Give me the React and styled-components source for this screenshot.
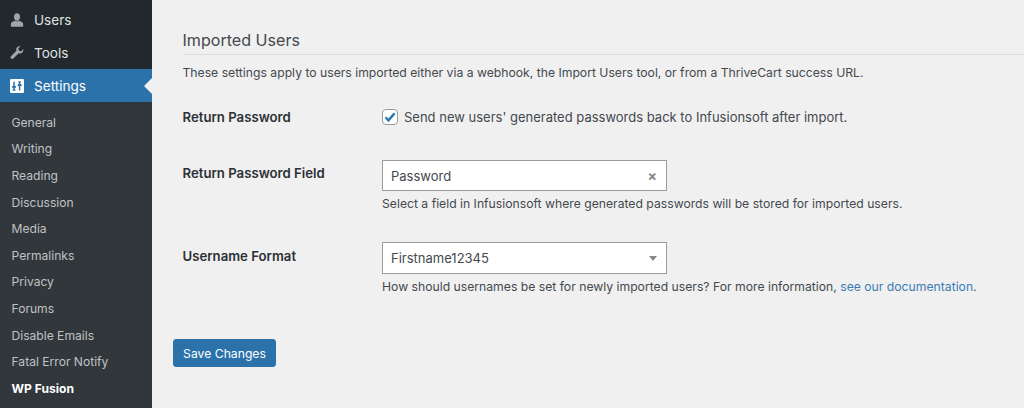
import React from "react";
import styled, { createGlobalStyle } from "styled-components";

const GlobalStyle = createGlobalStyle`
  html, body {
    margin: 0;
    padding: 0;
    background: #f0f0f0;
    overflow: hidden;
  }
  body {
    font-family: Inter, "Liberation Sans", sans-serif;
  }
`;

const subItems = [
  "General",
  "Writing",
  "Reading",
  "Discussion",
  "Media",
  "Permalinks",
  "Privacy",
  "Forums",
  "Disable Emails",
  "Fatal Error Notify",
];

const UserIcon = () => (
  <svg width="16" height="16" viewBox="0 0 16 16" fill="currentColor">
    <ellipse cx="8" cy="4.6" rx="3.4" ry="4.2" />
    <path d="M1 15.8v-3.2c0-1.7 1.6-2.6 3.4-3.2L6 8.9c1.2.8 2.8.8 4 0l1.6.5c1.8.6 3.4 1.5 3.4 3.2v3.2z" />
  </svg>
);

const WrenchIcon = () => (
  <svg width="17" height="17" viewBox="0 0 17 17" fill="currentColor">
    <path d="M16.2 4.4c.3 1.6-.2 3.1-1.3 4.1-1.2 1.1-2.9 1.4-4.3.8L4 15.9c-.8.8-2 .8-2.8 0s-.8-2 0-2.8l6.6-6.6c-.6-1.5-.3-3.2.9-4.3C9.8 1.1 11.3.6 12.8.9L10.2 3.5l.6 2.9 2.9.6z" />
  </svg>
);

const SettingsIcon = () => (
  <svg width="16" height="16" viewBox="0 0 16 16">
    <rect width="16" height="16" rx="1.5" fill="#fff" />
    <path d="M4.6 3v7M2.6 8.2l2 2.4 2-2.4M11 13V6M9 7.8l2-2.4 2 2.4M3 12.5h3.2M9.6 3.5h2.8" fill="none" stroke="#2b72ab" strokeWidth="1.7" />
  </svg>
);

const Page = styled.div`
  display: flex;
  width: 1024px;
  height: 408px;
  overflow: hidden;
  color: #44494e;
`;

const Sidebar = styled.nav`
  flex: 0 0 152px;
  display: flex;
  flex-direction: column;
  padding-top: 3px;
  background: #23282d;
`;

const MenuItem = styled.div`
  position: relative;
  display: flex;
  align-items: center;
  gap: 10px;
  height: 33px;
  padding-left: 10px;
  font-size: 13.6px;
  color: ${(p) => (p.$active ? "#fff" : "#dfe1e3")};
  background: ${(p) => (p.$active ? "#2b72ab" : "transparent")};
`;

const MenuIcon = styled.span`
  display: flex;
  justify-content: center;
  width: 14px;
  color: ${(p) => (p.$active ? "#fff" : "#a0a5aa")};
`;

const Notch = styled.span`
  position: absolute;
  right: 0;
  top: 9px;
  border: 8px solid transparent;
  border-left-width: 0;
  border-right-color: #f0f0f0;
`;

const SubMenu = styled.div`
  flex: 1;
  display: flex;
  flex-direction: column;
  padding-top: 7px;
  background: #32373c;
`;

const SubItem = styled.div`
  display: flex;
  align-items: center;
  height: 26.6px;
  padding-left: 11.5px;
  font-size: 12.1px;
  font-weight: ${(p) => (p.$active ? 700 : 400)};
  color: ${(p) => (p.$active ? "#fff" : "#bfc2c4")};
`;

const Content = styled.main`
  flex: 1;
  min-width: 0;
  padding: 30px 0 0 21px;
`;

const Title = styled.h2`
  margin: 0 0 0 9.5px;
  padding-bottom: 3px;
  height: 21px;
  font-size: 16.1px;
  font-weight: 400;
  line-height: 21px;
  color: #44494e;
  border-bottom: 1px solid #dcdcde;
`;

const Intro = styled.p`
  margin: 10px 0 0 9.5px;
  font-size: 12.2px;
  line-height: 16px;
`;

const Row = styled.div`
  display: grid;
  grid-template-columns: 199.5px 1fr;
  margin-left: 9.5px;
  margin-top: ${(p) => p.$top}px;
`;

const Label = styled.div`
  padding-top: ${(p) => p.$pad || 0}px;
  font-size: 13.2px;
  font-weight: 600;
  line-height: 16px;
  color: #2c3136;
`;

const CheckLine = styled.label`
  display: flex;
  align-items: center;
  gap: 6px;
  font-size: 13px;
  line-height: 16px;
`;

const CheckBox = styled.span`
  display: flex;
  align-items: center;
  justify-content: center;
  box-sizing: border-box;
  width: 16px;
  height: 16px;
  background: #fff;
  border: 1px solid #9a9c9f;
  border-radius: 4px;
`;

const SelectBox = styled.div`
  box-sizing: border-box;
  display: flex;
  align-items: center;
  justify-content: space-between;
  width: 285px;
  height: ${(p) => p.$height}px;
  padding: 0 9px 0 8px;
  font-size: 13px;
  background: #fff;
  border: 1px solid #9a9c9f;
`;

const ClearMark = styled.span`
  font-size: 14px;
  font-weight: 700;
  color: #888;
`;

const Caret = styled.span`
  border: 4px solid transparent;
  border-bottom-width: 0;
  border-top: 5px solid #888;
`;

const Help = styled.p`
  margin: 5px 0 0;
  font-size: 12.2px;
  line-height: 16px;
`;

const DocLink = styled.a`
  color: #3b7db3;
  text-decoration: none;
`;

const SaveButton = styled.button`
  display: block;
  width: 103px;
  height: 28px;
  margin-top: 44px;
  padding: 0;
  font-family: inherit;
  font-size: 12.2px;
  color: #fff;
  background: #2b72ab;
  border: 1px solid #2b72ab;
  border-radius: 3px;
`;

export default function App() {
  return (
    <>
      <GlobalStyle />
      <Page>
        <Sidebar>
          <MenuItem>
            <MenuIcon><UserIcon /></MenuIcon>
            Users
          </MenuItem>
          <MenuItem>
            <MenuIcon><WrenchIcon /></MenuIcon>
            Tools
          </MenuItem>
          <MenuItem $active>
            <MenuIcon $active><SettingsIcon /></MenuIcon>
            Settings
            <Notch />
          </MenuItem>
          <SubMenu>
            {subItems.map((s) => (
              <SubItem key={s}>{s}</SubItem>
            ))}
            <SubItem $active>WP Fusion</SubItem>
          </SubMenu>
        </Sidebar>
        <Content>
          <Title>Imported Users</Title>
          <Intro>These settings apply to users imported either via a webhook, the Import Users tool, or from a ThriveCart success URL.</Intro>
          <Row $top={28}>
            <Label>Return Password</Label>
            <CheckLine>
              <CheckBox>
                <svg width="14" height="14" viewBox="0 0 14 14">
                  <path d="M2.5 7.2l3 3.2 6-7" fill="none" stroke="#2f79b1" strokeWidth="2.4" />
                </svg>
              </CheckBox>
              Send new users' generated passwords back to Infusionsoft after import.
            </CheckLine>
          </Row>
          <Row $top={35}>
            <Label $pad={5}>Return Password Field</Label>
            <div>
              <SelectBox $height={31}>
                Password
                <ClearMark>×</ClearMark>
              </SelectBox>
              <Help>Select a field in Infusionsoft where generated passwords will be stored for imported users.</Help>
            </div>
          </Row>
          <Row $top={30}>
            <Label $pad={6}>Username Format</Label>
            <div>
              <SelectBox $height={32}>
                Firstname12345
                <Caret />
              </SelectBox>
              <Help>
                How should usernames be set for newly imported users? For more information, <DocLink href="#">see our documentation</DocLink>.
              </Help>
            </div>
          </Row>
          <SaveButton>Save Changes</SaveButton>
        </Content>
      </Page>
    </>
  );
}
